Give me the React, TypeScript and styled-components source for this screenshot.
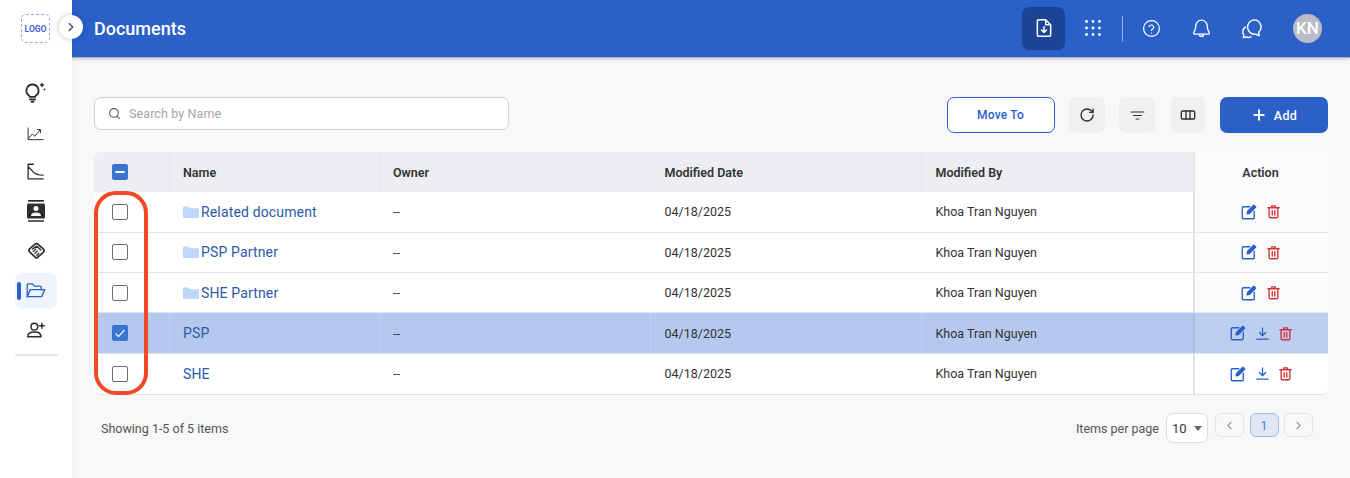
import { FunctionComponent, ReactNode } from "react";
import styled, { createGlobalStyle } from "styled-components";
import { ChevronLeft, ChevronRight, Plus, RotateCw, Search } from "lucide-react";

const GlobalStyle = createGlobalStyle`
  html, body {
    margin: 0;
    padding: 0;
    background: #f8f8f8;
    font-family: Roboto, "Liberation Sans", sans-serif;
  }
  * { box-sizing: border-box; }
`;

const Page = styled.div`
  display: flex;
  width: 1350px;
  height: 478px;
  overflow: hidden;
  position: relative;
`;

const Sidebar = styled.aside`
  width: 72px;
  flex: none;
  background: #fff;
  display: flex;
  flex-direction: column;
  align-items: center;
  padding-top: 14px;
  position: relative;
  box-shadow: 2px 0 6px rgba(0, 0, 0, 0.04);
  z-index: 3;
`;

const Logo = styled.div`
  width: 29px;
  height: 29px;
  border: 1px dashed #93a8ee;
  border-radius: 5px;
  display: flex;
  align-items: center;
  justify-content: center;
  color: #4263d8;
  font-size: 8.500px;
  font-weight: 700;
  margin-left: -1px;
  margin-bottom: 31.500px;
`;

const Toggle = styled.button`
  position: absolute;
  top: 15px;
  left: 59px;
  width: 24px;
  height: 24px;
  padding: 0;
  border: none;
  border-radius: 50%;
  background: #fff;
  color: #555;
  display: flex;
  align-items: center;
  justify-content: center;
  box-shadow: 0 0 5px rgba(0, 0, 0, 0.25);
`;

const NavItem = styled.div<{ $active?: boolean }>`
  width: 42px;
  height: 35px;
  margin-bottom: 4.700px;
  border-radius: 7px;
  display: flex;
  align-items: center;
  justify-content: center;
  position: relative;
  background: ${(p) => (p.$active ? "#edf4fe" : "transparent")};
  color: ${(p) => (p.$active ? "#2b60c9" : "#2e2e2e")};

  ${(p) =>
    p.$active &&
    `&::before {
      content: "";
      position: absolute;
      left: 2px;
      top: 9px;
      width: 4px;
      height: 18px;
      border-radius: 2px;
      background: #2b60c9;
    }`}
`;

const NavRule = styled.div`
  width: 43px;
  height: 2px;
  background: #e8e8e8;
  margin-top: 1.500px;
`;

const Main = styled.main`
  flex: 1;
  min-width: 0;
  display: flex;
  flex-direction: column;
`;

const Header = styled.header`
  height: 58px;
  flex: none;
  background: #2b60c9;
  border-bottom: 1px solid #a9b1c0;
  box-shadow: 0 1px 3px rgba(0, 0, 0, 0.2);
  display: flex;
  align-items: center;
  padding: 0 28px 0 22px;
  color: #fff;
`;

const Title = styled.h1`
  margin: 0 auto 0 0;
  font-size: 18px;
  font-weight: 500;
`;

const HeaderIcon = styled.div<{ $active?: boolean }>`
  width: ${(p) => (p.$active ? 43 : 50)}px;
  height: 43px;
  border-radius: 7px;
  display: flex;
  align-items: center;
  justify-content: center;
  background: ${(p) => (p.$active ? "#1b4594" : "transparent")};
  margin: 0 ${(p) => (p.$active ? 3 : 0)}px 1px 0;
`;

const HeaderRule = styled.div`
  width: 1px;
  height: 26px;
  background: #8eaade;
  margin: 0 3px 0 4px;
`;

const Avatar = styled.div`
  width: 29px;
  height: 29px;
  border-radius: 50%;
  background: #b9bcc4;
  color: #fff;
  font-size: 17px;
  font-weight: 500;
  display: flex;
  align-items: center;
  justify-content: center;
  margin: 0 0 1px 17px;
`;

const Content = styled.div`
  flex: 1;
  padding: 39px 22px 0 22px;
  position: relative;
`;

const Toolbar = styled.div`
  display: flex;
  align-items: center;
  height: 36px;
  margin-bottom: 19px;
`;

const SearchBox = styled.div`
  width: 415px;
  height: 33px;
  margin-right: auto;
  align-self: flex-start;
  border: 1px solid #cfcfcf;
  border-radius: 7px;
  background: #fff;
  display: flex;
  align-items: center;
  gap: 8px;
  padding-left: 13px;
  color: #a4a4a4;
  font-size: 12.500px;
  letter-spacing: 0.1px;
`;

const OutlineButton = styled.button`
  width: 108px;
  height: 36px;
  padding: 0;
  border: 1px solid #2b60c9;
  border-radius: 7px;
  background: #fff;
  color: #2b60c9;
  font: 500 12px Roboto, sans-serif;
  letter-spacing: 0.2px;
  margin-right: 14px;
`;

const IconButton = styled.button`
  width: 36px;
  height: 36px;
  padding: 0;
  border: none;
  border-radius: 7px;
  background: #eff0f2;
  color: #2e2e2e;
  display: flex;
  align-items: center;
  justify-content: center;
  margin-right: 14.500px;
`;

const AddButton = styled.button`
  width: 108px;
  height: 36px;
  padding: 0;
  border: none;
  border-radius: 7px;
  background: #2b60c9;
  color: #fff;
  font: 500 12.500px Roboto, sans-serif;
  letter-spacing: 0.3px;
  display: flex;
  align-items: center;
  justify-content: center;
  gap: 7px;
`;

const Table = styled.div`
  width: 1234px;
  border-radius: 7px;
  overflow: hidden;
  border-bottom: 1px solid #e3e3e3;
`;

const Row = styled.div<{ $selected?: boolean; $head?: boolean }>`
  display: grid;
  grid-template-columns: 74.500px 210px 271.500px 271px 272px 135px;
  height: ${(p) => (p.$head ? 40.2 : 40.4)}px;
  background: ${(p) => (p.$head ? "#eceef2" : p.$selected ? "#b5c9ee" : "#fff")};
  border-bottom: ${(p) => (p.$head ? "none" : "1px solid #e3e3e3")};

  &:last-child {
    border-bottom: none;
  }
`;

const Cell = styled.div<{ $head?: boolean; $selected?: boolean }>`
  display: flex;
  align-items: center;
  padding-left: 13.500px;
  font-size: 12.500px;
  color: #333;
  font-weight: ${(p) => (p.$head ? 600 : 400)};
  border-left: 1px solid ${(p) => (p.$head ? "#e6e8ed" : p.$selected ? "#c0d1f0" : "transparent")};
`;

const CheckCell = styled.div`
  display: flex;
  align-items: center;
  padding-left: 18px;
`;

const NameCell = styled(Cell)`
  color: #2a5aa8;
  font-size: 14px;
  letter-spacing: 0.15px;
  gap: 2px;
`;

const ActionCell = styled.div<{ $selected?: boolean; $last?: boolean }>`
  display: flex;
  align-items: center;
  justify-content: center;
  gap: 8px;
  padding-right: 2px;
  border-left: 2px solid ${(p) => (p.$selected ? "#a9bee4" : "#e1e2e4")};
  background: ${(p) => (p.$selected ? "#bccfef" : p.$last ? "#fff" : "#fbfbfb")};
  font-size: 12.500px;
  font-weight: 600;
  color: #333;
`;

const Box = styled.span<{ $on?: boolean }>`
  width: 16px;
  height: 16px;
  border-radius: 2px;
  border: ${(p) => (p.$on ? "none" : "1.500px solid #6f6f6f")};
  background: ${(p) => (p.$on ? "#3a75d2" : "#fff")};
  display: flex;
  align-items: center;
  justify-content: center;
`;

const Annotation = styled.div`
  position: absolute;
  left: 21.500px;
  top: 132.500px;
  width: 54px;
  height: 204.500px;
  border: 4px solid #ee4a26;
  border-radius: 22px;
  pointer-events: none;
`;

const Footer = styled.div`
  width: 1234px;
  display: flex;
  align-items: center;
  margin-top: 18px;
  padding: 0 15px 0 7px;
  color: #555;
  font-size: 12.500px;
`;

const Showing = styled.span`
  margin-right: auto;
`;

const PerPage = styled.div`
  width: 42px;
  height: 30px;
  margin: 0 1.500px 0 7px;
  border: 1px solid #dedede;
  border-radius: 7px;
  background: #fff;
  display: flex;
  align-items: center;
  justify-content: space-between;
  padding: 0 5px;
  color: #333;
  font-size: 13px;
`;

const Caret = styled.span`
  width: 0;
  height: 0;
  border-left: 4.500px solid transparent;
  border-right: 4.500px solid transparent;
  border-top: 5px solid #666;
`;

const PageButton = styled.div<{ $current?: boolean }>`
  width: 29px;
  height: 24px;
  margin-left: 5.500px;
  align-self: flex-start;
  border: 1px solid ${(p) => (p.$current ? "#9cbcec" : "#e4e4e4")};
  border-radius: 6px;
  background: ${(p) => (p.$current ? "#dfe7f5" : "transparent")};
  color: ${(p) => (p.$current ? "#4c7fd0" : "#999")};
  display: flex;
  align-items: center;
  justify-content: center;
  font-size: 12.500px;
`;

const Svg: FunctionComponent<{ size?: number; color?: string; width?: number; children: ReactNode }> = ({
  size = 20,
  color = "currentColor",
  width = 1.500,
  children,
}) => (
  <svg
    width={size}
    height={size}
    viewBox="0 0 24 24"
    fill="none"
    stroke={color}
    strokeWidth={width}
    strokeLinecap="round"
    strokeLinejoin="round"
  >
    {children}
  </svg>
);

const BLUE = "#2b60c9";
const RED = "#d0343a";

const EditIcon = () => (
  <Svg size={18} color={BLUE} width={1.800}>
    <path d="M13 5H4.500A1.500 1.500 0 0 0 3 6.500v13A1.500 1.500 0 0 0 4.500 21h13a1.500 1.500 0 0 0 1.500-1.500V11" />
    <path d="M9.500 14.500l.8-3.400L18.500 3l2.500 2.500-8.200 8.200z" fill={BLUE} />
  </Svg>
);

const DownloadIcon = () => (
  <Svg size={15} color={BLUE} width={2}>
    <path d="M12 3v12M7 10.500l5 5 5-5M3 21h18" />
  </Svg>
);

const TrashIcon = () => (
  <Svg size={15} color={RED} width={2.200}>
    <path d="M3 6h18M9 6V3h6v3M5 6v14a2 2 0 0 0 2 2h10a2 2 0 0 0 2-2V6M10 10.500v7M14 10.500v7" />
  </Svg>
);

const FolderIcon = () => (
  <svg width="16" height="16" viewBox="1 0 16 16">
    <path d="M1 3.500A1 1 0 0 1 2 2.500h4l1.500 1.800H16a1 1 0 0 1 1 1V13a1 1 0 0 1-1 1H2a1 1 0 0 1-1-1z" fill="#bfd7fb" />
  </svg>
);

const Checked = () => (
  <Box $on>
    <svg width="12" height="12" viewBox="0 0 12 12" fill="none" stroke="#dfe9fa" strokeWidth="1.500">
      <path d="M1.500 6.500l3 3 6-6.500" />
    </svg>
  </Box>
);

const Indeterminate = () => (
  <Box $on>
    <svg width="10" height="10" viewBox="0 0 10 10" stroke="#fff" strokeWidth="2">
      <path d="M0.500 5h9" />
    </svg>
  </Box>
);

const navIcons = [
  <Svg size={24} key="bulb" width={1.800}>
    <path d="M8.500 4.500a6 6 0 0 0-3.500 10.900c.5.400.7.9.7 1.400h5.600c0-.5.200-1 .7-1.400A6 6 0 0 0 8.500 4.500z" />
    <path d="M6 19.500h5M7.500 21.800h2" />
    <path d="M18 3.500v3M16.500 5h3" strokeWidth={1.400} />
    <path d="M20.500 9.300v.3" />
  </Svg>,
  <Svg size={18} key="chart" width={1.300}>
    <path d="M1.500 6.700v15.500h20M2 20.700l5-6 3.500 3 6.500-8M14 8.700h4v4" />
  </Svg>,
  <Svg size={18} key="decline" width={1.800}>
    <path d="M1.500 3h7M1.500 3v19.500h20M2 6.500l6.500 7c3 3 6 4 13 4" />
  </Svg>,
  <svg width="20" height="24" viewBox="0 0 20 24" key="contacts">
    <path d="M2 1.800h16M2 22h16" stroke="#2e2e2e" strokeWidth="1.700" />
    <rect x="1" y="4.500" width="18" height="15" rx="1.500" fill="#2e2e2e" />
    <circle cx="10" cy="9.500" r="2.500" fill="#fff" />
    <path d="M5 17c0-2.500 2.200-3.500 5-3.500s5 1 5 3.500z" fill="#fff" />
  </svg>,
  <Svg size={19} key="handshake" width={2.200}>
    <path d="M9.500 4.500c1.500-1.500 3.500-1.500 5 0l6 5.500c1.300 1.300 1.300 3 0 4.300L13 21c-.6.600-1.400.600-2 0l-7.500-7c-1.300-1.300-1.300-3 0-4.300z" />
    <path d="M7 10l5.500-3.500 5 5M8 13l3-2.500M10 15.500l3-2.500M12.500 18l2.500-2.500" strokeWidth={1.800} />
  </Svg>,
  <Svg size={21} key="folder">
    <g transform="translate(-1.600 0)">
      <path d="M3 19V6a1.500 1.500 0 0 1 1.500-1.500h4.500l2 2.500h6.500A1.500 1.500 0 0 1 19 8.500V11" />
      <path d="M3 19l3.500-8H23l-3.500 8z" />
    </g>
  </Svg>,
  <Svg size={20} key="adduser" width={1.800}>
    <circle cx="10" cy="8" r="4" />
    <path d="M2 20c0-3.500 3.500-5.500 8-5.500s8 2 8 5.500zM19 4v6M16 7h6" />
  </Svg>,
];

const rows = [
  { name: "Related document", folder: true, selected: false },
  { name: "PSP Partner", folder: true, selected: false },
  { name: "SHE Partner", folder: true, selected: false },
  { name: "PSP", folder: false, selected: true },
  { name: "SHE", folder: false, selected: false },
];

const App: FunctionComponent = () => (
  <Page>
    <GlobalStyle />
    <Sidebar>
      <Logo>LOGO</Logo>
      <Toggle>
        <ChevronRight size={14} strokeWidth={2.500} />
      </Toggle>
      {navIcons.map((icon, i) => (
        <NavItem key={i} $active={i === 5}>
          {icon}
        </NavItem>
      ))}
      <NavRule />
    </Sidebar>
    <Main>
      <Header>
        <Title>Documents</Title>
        <HeaderIcon $active>
          <Svg size={20} width={1.800}>
            <path d="M6 2h8l6 6v12a2 2 0 0 1-2 2H6a2 2 0 0 1-2-2V4a2 2 0 0 1 2-2zM14 2v6h6" />
            <path d="M12 10.500v7M9 14.500l3 3 3-3" />
          </Svg>
        </HeaderIcon>
        <HeaderIcon>
          <svg width="16" height="16" viewBox="0 0 16 16" fill="#fff">
            {[1.500, 8, 14.500].flatMap((y) =>
              [1.500, 8, 14.500].map((x) => <circle key={`${x}-${y}`} cx={x} cy={y} r="1.400" />)
            )}
          </svg>
        </HeaderIcon>
        <HeaderRule />
        <HeaderIcon>
          <Svg size={19} width={1.500}>
            <circle cx="12" cy="12" r="10" />
            <path d="M9 9.500a3 3 0 0 1 5.800 1c0 2-2.800 2.200-2.800 4M12 17.800v.1" />
          </Svg>
        </HeaderIcon>
        <HeaderIcon>
          <Svg size={21} width={1.500}>
            <path d="M12 2.500a6.500 6.500 0 0 0-6.500 6.500c0 5-2.500 7-2.500 8.500 0 .5.500 1 1 1h16c.5 0 1-.5 1-1 0-1.500-2.500-3.500-2.500-8.500A6.500 6.500 0 0 0 12 2.500zM9.500 18.500a2.500 2.500 0 0 0 5 0" />
          </Svg>
        </HeaderIcon>
        <HeaderIcon>
          <Svg size={23} width={1.500}>
            <path d="M14.500 3a7.500 7.500 0 0 1 5 13l.5 3.500-3.500-1.500A7.500 7.500 0 1 1 14.500 3z" />
            <path d="M5.500 10.500A6 6 0 0 0 4 19l-.5 2.500 3-.7c1.500.7 3.500.7 5 0" />
          </Svg>
        </HeaderIcon>
        <Avatar>KN</Avatar>
      </Header>
      <Content>
        <Toolbar>
          <SearchBox>
            <Search size={13} color="#555" />
            Search by Name
          </SearchBox>
          <OutlineButton>Move To</OutlineButton>
          <IconButton>
            <RotateCw size={16} strokeWidth={2} />
          </IconButton>
          <IconButton>
            <Svg size={17} width={1.600}>
              <path d="M3 7h18M6.500 12h11M10 17h4" />
            </Svg>
          </IconButton>
          <IconButton>
            <Svg size={16} width={2}>
              <rect x="2" y="6" width="20" height="12" rx="2" />
              <path d="M9 6v12M15 6v12" />
            </Svg>
          </IconButton>
          <AddButton>
            <Plus size={16} strokeWidth={3} />
            Add
          </AddButton>
        </Toolbar>
        <Table>
          <Row $head>
            <CheckCell>
              <Indeterminate />
            </CheckCell>
            <Cell $head>Name</Cell>
            <Cell $head>Owner</Cell>
            <Cell $head>Modified Date</Cell>
            <Cell $head>Modified By</Cell>
            <ActionCell>Action</ActionCell>
          </Row>
          {rows.map((row, i) => (
            <Row key={row.name} $selected={row.selected}>
              <CheckCell>{row.selected ? <Checked /> : <Box />}</CheckCell>
              <NameCell $selected={row.selected}>
                {row.folder && <FolderIcon />}
                {row.name}
              </NameCell>
              <Cell $selected={row.selected}>--</Cell>
              <Cell $selected={row.selected}>04/18/2025</Cell>
              <Cell $selected={row.selected}>Khoa Tran Nguyen</Cell>
              <ActionCell $selected={row.selected} $last={i === rows.length - 1}>
                <EditIcon />
                {!row.folder && <DownloadIcon />}
                <TrashIcon />
              </ActionCell>
            </Row>
          ))}
        </Table>
        <Footer>
          <Showing>Showing 1-5 of 5 items</Showing>
          Items per page
          <PerPage>
            10
            <Caret />
          </PerPage>
          <PageButton>
            <ChevronLeft size={13} />
          </PageButton>
          <PageButton $current>1</PageButton>
          <PageButton>
            <ChevronRight size={13} />
          </PageButton>
        </Footer>
        <Annotation />
      </Content>
    </Main>
  </Page>
);

export default App;
